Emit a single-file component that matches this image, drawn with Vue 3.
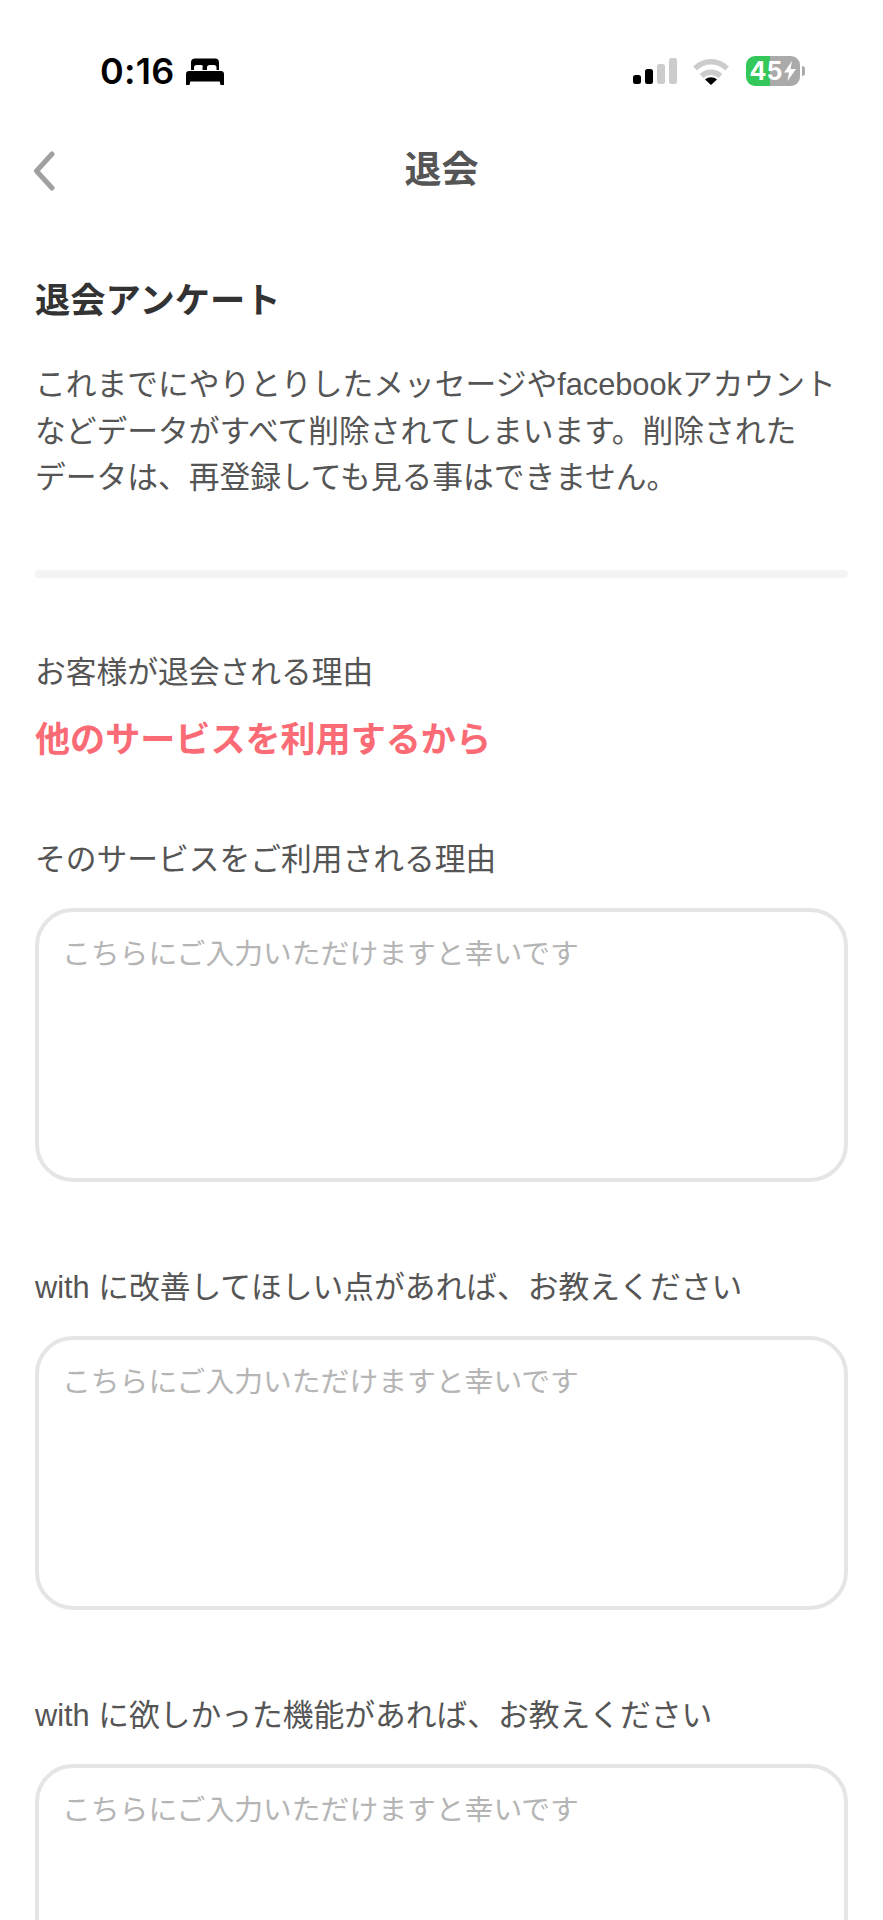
<template>
  <div class="screen">
    <!-- Status bar -->
    <header class="status-bar">
      <div class="status-left">
        <span class="clock">0:16</span>
        <svg class="bed" viewBox="0 0 38 27" aria-hidden="true">
          <path d="M5 12V4.500C5 2 6.500 0.500 9 0.500h20c2.500 0 4 1.500 4 4V12h-2.500V9.500c0-1.500-1-2.500-2.500-2.500h-4.500c-1.500 0-2.500 1-2.500 2.500V12h-4.500V9.500C17.500 8 16.500 7 15 7h-4.500C9 7 8 8 8 9.500V12z" />
          <path d="M3 13h32c1.800 0 3 1.200 3 3v11h-3.500l-.8-3.500H4.300L3.500 27H0V16c0-1.800 1.200-3 3-3z" />
        </svg>
      </div>
      <div class="status-right">
        <div class="signal">
          <span
            v-for="(bar, i) in signalBars"
            :key="i"
            class="bar"
            :class="{ on: i < 2 }"
            :style="{ height: bar + 'px' }"
          ></span>
        </div>
        <svg class="wifi" viewBox="0 0 36 27" aria-hidden="true">
          <path d="M2 10.500C11 1.500 25 1.500 34 10.500" class="wifi-off" />
          <path d="M8.500 18C14 13 22 13 27.500 18" class="wifi-off" />
          <path d="M12 21.500L18 27l6-5.500C20.500 18.500 15.500 18.500 12 21.500z" class="wifi-on" />
        </svg>
        <div class="battery">
          <span class="battery-level">45</span>
          <svg class="bolt" viewBox="0 0 12 20" aria-hidden="true">
            <path d="M8 0L0 11.500h5L3.500 20 12 8H6.500z" />
          </svg>
        </div>
        <span class="battery-nub"></span>
      </div>
    </header>

    <!-- Nav -->
    <nav class="nav">
      <svg class="back" viewBox="0 0 22 40" aria-hidden="true">
        <path d="M19 3L3.500 20 19 37" />
      </svg>
      <h1 class="nav-title">退会</h1>
    </nav>

    <main class="content">
      <h2 class="heading">退会アンケート</h2>
      <p class="notice">
        これまでにやりとりしたメッセージやfacebookアカウント<br />
        などデータがすべて削除されてしまいます。削除された<br />
        データは、再登録しても見る事はできません。
      </p>

      <hr class="divider" />

      <p class="label">お客様が退会される理由</p>
      <p class="reason">他のサービスを利用するから</p>

      <section v-for="field in fields" :key="field" class="field">
        <label class="label">{{ field }}</label>
        <textarea class="input" placeholder="こちらにご入力いただけますと幸いです"></textarea>
      </section>
    </main>
  </div>
</template>

<script setup>
const signalBars = [9, 15, 20, 26]

const fields = [
  'そのサービスをご利用される理由',
  'with に改善してほしい点があれば、お教えください',
  'with に欲しかった機能があれば、お教えください',
]
</script>

<style>
html, body { background: #fff; }
</style>

<style scoped>
.screen {
  height: 1920px;
  overflow: hidden;
  background: #fff;
  font-family: "Liberation Sans", "Noto Sans CJK JP", sans-serif;
  color: #555;
}

/* Status bar */
.status-bar {
  display: flex;
  justify-content: space-between;
  align-items: center;
  height: 30px;
  padding: 56px 78px 0 100px;
}
.status-left { display: flex; align-items: center; gap: 11px; }
.clock {
  font-family: Inter, sans-serif;
  font-size: 36px;
  font-weight: 600;
  line-height: 30px;
  letter-spacing: 0.3px;
  color: #000;
}
.bed { width: 38px; height: 27px; fill: #000; }
.status-right { display: flex; align-items: center; }
.signal { display: flex; align-items: flex-end; gap: 4px; height: 26px; margin-right: 16px; }
.bar { width: 8px; border-radius: 2.500px; background: #ccc; }
.bar.on { background: #000; }
.wifi { width: 36px; height: 27px; margin-right: 17px; }
.wifi-off { fill: none; stroke: #ccc; stroke-width: 5.500; }
.wifi-on { fill: #000; }
.battery {
  display: flex;
  align-items: center;
  justify-content: center;
  gap: 2px;
  width: 54px;
  height: 30px;
  border-radius: 9px;
  background: linear-gradient(90deg, #34c759 0, #34c759 45%, #aaa 45%, #aaa 100%);
}
.battery-level {
  font-family: Inter, sans-serif;
  font-size: 25px;
  font-weight: 700;
  line-height: 30px;
  color: #fff;
}
.bolt { width: 12px; height: 20px; fill: #fff; }
.battery-nub {
  width: 3px;
  height: 10px;
  margin-left: 2px;
  border-radius: 0 3px 3px 0;
  background: #aaa;
}

/* Nav */
.nav {
  position: relative;
  display: flex;
  justify-content: center;
  align-items: center;
  height: 60px;
  margin-top: 55px;
}
.back {
  position: absolute;
  left: 33px;
  top: 10px;
  width: 22px;
  height: 40px;
  fill: none;
  stroke: #a0a0a0;
  stroke-width: 5;
  stroke-linecap: round;
  stroke-linejoin: round;
}
.nav-title {
  margin: 0;
  font-size: 37px;
  font-weight: 700;
  line-height: 60px;
  color: #555;
}

/* Content */
.content { padding: 0 35px; }
.heading {
  margin: 75px 0 0;
  font-size: 35.300px;
  font-weight: 700;
  line-height: 50px;
  color: #333;
}
.notice {
  margin: 36px 0 0;
  font-size: 30.750px;
  line-height: 46.500px;
  white-space: nowrap;
}
.divider {
  height: 8px;
  margin: 68px 0 0;
  border: 0;
  border-radius: 4px;
  background: #f4f4f4;
}
.label {
  display: block;
  margin: 0;
  font-size: 30.750px;
  line-height: 46px;
  white-space: nowrap;
}
.divider + .label { margin-top: 72px; }
.reason {
  margin: 19px 0 0;
  font-size: 35.100px;
  font-weight: 700;
  line-height: 50px;
  color: #fb6b75;
}
.field { margin-top: 72px; }
.field + .field { margin-top: 83px; }
.input {
  display: block;
  box-sizing: border-box;
  width: 100%;
  height: 274px;
  margin-top: 25px;
  padding: 21px 23px;
  border: 4px solid #e5e5e5;
  border-radius: 38px;
  outline: none;
  resize: none;
  background: #fff;
  font-family: inherit;
  font-size: 28.800px;
  line-height: 42px;
}
.input::placeholder { color: #b5b5b5; opacity: 1; }
</style>
